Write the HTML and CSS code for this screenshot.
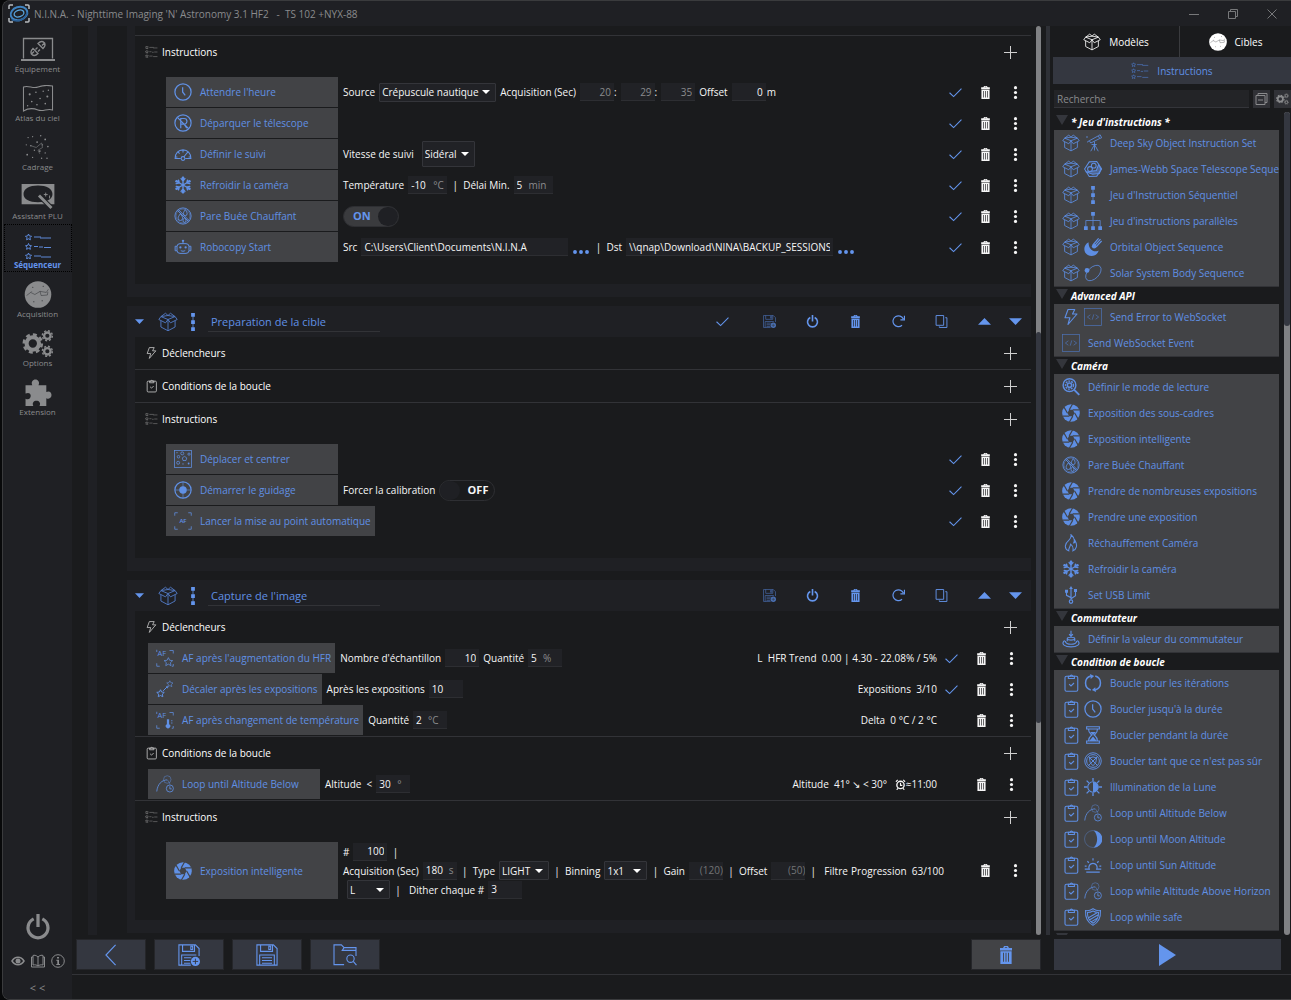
FILE: index.html
```html
<!DOCTYPE html>
<html lang="fr">
<head>
<meta charset="utf-8">
<meta name="viewport" content="width=device-width, initial-scale=1">
<title>N.I.N.A. - Séquenceur</title>
<link rel="stylesheet" href="styles.css">
</head>
<body>
<svg class="sprite" aria-hidden="true">
  <defs>
    <symbol id="i-box" viewBox="0 0 24 24"><g fill="none" stroke="currentColor" stroke-width="1.1" stroke-linejoin="round"><path d="M12 9 3.5 5.5 9 1.5l3 2.7 3-2.7 5.5 4L12 9zM3.500 5.500 1 9l8 4 3-4 3 4 8-4-2.500-3.500M3.500 10.500V18L12 22.500 20.500 18v-7.500M12 9v13.500M3.500 5.500 12 4.200l8.500 1.300"/></g></symbol>
    <symbol id="i-list" viewBox="0 0 24 24"><g fill="none" stroke="currentColor" stroke-width="1"><path d="m3.500 1 .8 1.700 1.900.2-1.400 1.300.4 1.900-1.700-1-1.700 1 .4-1.900L.8 2.900l1.900-.2z"/><path d="m3.500 9 .8 1.700 1.900.2-1.400 1.300.4 1.900-1.700-1-1.700 1 .4-1.900L.8 10.900l1.900-.2zM3.500 17l.8 1.700 1.900.2-1.400 1.300.4 1.900-1.700-1-1.700 1 .4-1.900L.8 18.900l1.900-.2z"/><path d="M8 3.500h8M15 4.500h8M8 11.500h4M13 12.500h3M17 12h6M8 19.500h6M15 20.500h8"/></g></symbol>
    <symbol id="i-bolt" viewBox="0 0 24 24"><path fill="none" stroke="currentColor" stroke-width="1.500" stroke-linejoin="round" d="M8 2h9l-3 6h6L8 22l2.500-9H4z"/></symbol>
    <symbol id="i-clip" viewBox="0 0 24 24"><g fill="none" stroke="currentColor" stroke-width="1.500"><rect x="4" y="3" width="17" height="20" rx="2"/><path d="M8.500 3v3h8V3H14a1.500 1.500 0 0 0-3 0zM9.500 13.500l2.500 2.500 4-4"/></g></symbol>
    <symbol id="i-clock" viewBox="0 0 24 24"><g fill="none" stroke="currentColor" stroke-width="1.700"><circle cx="12" cy="12" r="10.800"/><path d="M11.500 5.500V12l3.500 4.500"/></g></symbol>
    <symbol id="i-unpark" viewBox="0 0 24 24"><g fill="none" stroke="currentColor" stroke-width="1.600"><circle cx="12" cy="12" r="10.800"/><path d="M9 19V6h4.500a3.500 3.500 0 0 1 0 7.500H9M13.500 13.500 17 19M4.500 4.500l15 15"/></g></symbol>
    <symbol id="i-gauge" viewBox="0 0 24 24"><g fill="none" stroke="currentColor" stroke-width="1.400"><path d="M9 18H1.500c0-7 4.500-11.500 10.500-11.500S22.500 11 22.500 18H15M12 6.500V10M5.500 9.500l2 2M18.500 9.500l-2 2M1.500 16h3M22.500 16h-3M13 16l4-5"/><circle cx="12" cy="18" r="2.500"/></g></symbol>
    <symbol id="i-snow" viewBox="0 0 24 24"><g fill="none" stroke="currentColor" stroke-width="1.900" stroke-linecap="round"><path d="M12 2v20M3.300 7l17.400 10M20.700 7 3.300 17M9.500 3.500 12 6.500l2.500-3M9.500 20.500l2.500-3 2.500 3M3 10l4-.8L6 5.500M21 14l-4 .8 1 3.700M18 5.500l-1 3.700 4 .8M6 18.500l1-3.700L3 14"/></g><g fill="currentColor"><circle cx="12" cy="2.500" r="1.800"/><circle cx="12" cy="21.500" r="1.800"/><circle cx="3.500" cy="7" r="1.800"/><circle cx="20.500" cy="7" r="1.800"/><circle cx="3.500" cy="17" r="1.800"/><circle cx="20.500" cy="17" r="1.800"/></g></symbol>
    <symbol id="i-dew" viewBox="0 0 24 24"><g fill="none" stroke="currentColor" stroke-width="1.200"><circle cx="12" cy="12" r="10.800"/><circle cx="12" cy="12" r="9.300" stroke-width=".6"/><path d="m4.500 4.500 15 15M6 3.500 20 18M8.500 9c-2 3-3 4-3 6a3 3 0 0 0 6 0c0-2-1-3-3-6zM15 3.500c-1.500 2.500-2.500 3.500-2.500 5.500a2.500 2.500 0 0 0 5 0c0-2-1-3-2.500-5.500zM14 14c-1.500 2-2 3-2 4.500a2 2 0 0 0 4 0c0-1.500-1-2.500-2-4.500z"/></g></symbol>
    <symbol id="i-robot" viewBox="0 0 24 24"><g fill="none" stroke="currentColor" stroke-width="1.300"><rect x="4" y="7.500" width="16" height="13" rx="4"/><path d="M4 11H1.500v6H4M20 11h2.500v6H20M12 7.500V5M9 16.500c1.500 1.500 4.500 1.500 6 0"/></g><g fill="currentColor"><circle cx="12" cy="3.800" r="1.600"/><circle cx="8.500" cy="12.500" r="1.500"/><circle cx="15.500" cy="12.500" r="1.500"/></g></symbol>
    <symbol id="i-plate" viewBox="0 0 24 24"><g fill="none" stroke="currentColor" stroke-width="1"><rect x=".7" y=".7" width="22.600" height="22.600"/><path d="m14 8.500 3 2-1 3.500h-4l-1-3.500z"/><circle cx="11" cy="4.500" r="2"/><circle cx="6" cy="9" r="1.700"/><circle cx="5.500" cy="17" r="2"/><circle cx="20" cy="5.500" r="1.500"/></g><g fill="currentColor"><circle cx="4" cy="3.500" r=".8"/><circle cx="12" cy="18.500" r=".8"/><circle cx="19.500" cy="18" r="1.200"/></g></symbol>
    <symbol id="i-guide" viewBox="0 0 24 24"><circle cx="12" cy="12" r="10.800" fill="none" stroke="currentColor" stroke-width="1.600"/><path stroke="currentColor" stroke-width=".8" d="M12 1v22M1 12h22"/><circle cx="12" cy="12" r="5" fill="currentColor"/></symbol>
    <symbol id="i-frame" viewBox="0 0 24 24"><g fill="none" stroke="currentColor" stroke-width="1"><path d="M1 5V1h4M19 1h4v4M23 19v4h-4M5 23H1v-4"/></g></symbol>
    <symbol id="i-afstar" viewBox="0 0 24 24"><g fill="none" stroke="currentColor" stroke-width="1"><path d="M18 2h5v4M1 19v4h4M23 20v3h-2M1 4V1M16.500 11.500l1.700 3.500 4 .5-3 2.700.8 4-3.500-2-3.500 2 .8-4-3-2.700 4-.5z"/></g></symbol>
    <symbol id="i-aftemp" viewBox="0 0 24 24"><g fill="none" stroke="currentColor" stroke-width="1"><path d="M18 2h5v4M1 19v4h4M23 20v3h-2M1 4V1M20 13h2M20 16h2"/></g><path fill="currentColor" d="M14.500 11h3v6.500a3 3 0 1 1-3 0z"/></symbol>
    <symbol id="i-dither" viewBox="0 0 24 24"><g fill="none" stroke="currentColor" stroke-width="1.300"><path d="m6 13 1.500 3 3.500.5-2.500 2.300.6 3.500L6 20.700l-3 1.600.6-3.500L1 16.500l3.500-.5z"/><path d="M9.500 14.500 15 9M13.500 9H15.500v2"/><path opacity=".6" d="m18.500 1 1.200 2.500 3 .4-2.200 2 .6 3-2.600-1.500-2.600 1.500.6-3-2.200-2 3-.4z"/></g></symbol>
    <symbol id="i-alt" viewBox="0 0 24 24"><g fill="none" stroke="currentColor" stroke-width="1.100"><path d="M1 22C2 12 8 6.500 15 6.500"/><circle cx="15" cy="6" r="5" opacity=".55"/><path opacity=".55" d="M15 6.500c2 2 3 4 3.500 6"/><circle cx="18.500" cy="18" r="4.700"/><path d="M18.500 15v3.500H21"/></g></symbol>
    <symbol id="i-iris" viewBox="0 0 24 24"><circle cx="12" cy="12" r="11.800" fill="currentColor"/><path fill="var(--tile)" d="M16.800 12 14.400 16.200H9.600L7.200 12 9.600 7.800h4.800z"/><g stroke="var(--tile)" stroke-width="1.500"><path d="m14.400 16.200-4.500 7.800"/><path d="m14.400 16.200-4.500 7.800" transform="rotate(60 12 12)"/><path d="m14.400 16.200-4.500 7.800" transform="rotate(120 12 12)"/><path d="m14.400 16.200-4.500 7.800" transform="rotate(180 12 12)"/><path d="m14.400 16.200-4.500 7.800" transform="rotate(240 12 12)"/><path d="m14.400 16.200-4.500 7.800" transform="rotate(300 12 12)"/></g></symbol>
    <symbol id="i-check" viewBox="0 0 24 24"><path fill="none" stroke="currentColor" stroke-width="2" d="m1 12.500 7.500 7L23 5"/></symbol>
    <symbol id="i-trash" viewBox="0 0 24 24"><path fill="currentColor" fill-rule="evenodd" d="M8 2.500 9.500 0h5L16 2.500h4V6H4V2.500zm2.200 0h3.600L13.300 1.500h-2.600zM4.500 7h15v17h-15zM8 9v12h1.200V9zm3.400 0v12h1.200V9zm3.400 0v12H16V9z"/></symbol>
    <symbol id="i-dots" viewBox="0 0 24 24"><g fill="currentColor"><circle cx="12" cy="3" r="2.900"/><circle cx="12" cy="12" r="2.900"/><circle cx="12" cy="21" r="2.900"/></g></symbol>
    <symbol id="i-more" viewBox="0 0 24 8"><g fill="currentColor"><circle cx="4" cy="4" r="2.600"/><circle cx="12" cy="4" r="2.600"/><circle cx="20" cy="4" r="2.600"/></g></symbol>
    <symbol id="i-seq" viewBox="0 0 24 24"><g fill="currentColor"><path d="M9.500 0h5v5h-5zM9.500 9.500h5v5h-5zM9.500 19h5v5h-5zM11.500 4h1v16h-1z"/></g></symbol>
    <symbol id="i-plus" viewBox="0 0 13 13"><path stroke="currentColor" d="M6.500 0v13M0 6.500h13"/></symbol>
    <symbol id="i-save" viewBox="0 0 24 24"><g fill="none" stroke="currentColor" stroke-width="1.200"><path d="M1 1h18l4 4v18H1zM5 1v7h13V1M14 2.500h2V6h-2zM4 23V12h16v11M6.500 15h11M6.500 18h11M6.500 21h11"/></g></symbol>
    <symbol id="i-saveplus" viewBox="0 0 24 24"><g fill="none" stroke="currentColor" stroke-width="1.200"><path d="M14 23H1V1h18l4 4v8M5 1v7h13V1M14 2.500h2V6h-2zM4 23V12h16M6.500 15h8M6.500 18h7M6.500 21h7"/></g><circle cx="19" cy="19" r="5" fill="currentColor"/><path stroke="var(--btn)" d="M19 16v6M16 19h6"/></symbol>
    <symbol id="i-power" viewBox="0 0 24 24"><path fill="none" stroke="currentColor" stroke-width="3" d="M8 4.500a9.200 9.200 0 1 0 8 0M12 0v12"/></symbol>
    <symbol id="i-redo" viewBox="0 0 24 24"><path fill="none" stroke="currentColor" stroke-width="2.200" d="M18.500 19A10 10 0 1 1 21 7.500M23 1.500V9h-7.500"/></symbol>
    <symbol id="i-copy" viewBox="0 0 24 24"><path fill="none" stroke="currentColor" stroke-width="1.700" d="M2 1h14v18H2zM19 5h3v18H8v-2"/></symbol>
    <symbol id="i-up" viewBox="0 0 24 24"><path fill="currentColor" d="M12 5.500 24 18H0z"/></symbol>
    <symbol id="i-down" viewBox="0 0 24 24"><path fill="currentColor" d="M12 18.500 24 6H0z"/></symbol>
    <symbol id="i-scope" viewBox="0 0 24 24"><g fill="none" stroke="currentColor" stroke-width="1.100"><path d="m7 9 12-6.500 2 3.500L9 12zM19 2.500l2.500-1.500 2 4L21 6M4 11l3-2M14 10v4M14 14 9 23M14 14l5 9M14 14v8M10 14h7"/></g><circle cx="4" cy="4" r="1" fill="currentColor"/></symbol>
    <symbol id="i-jwst" viewBox="0 0 24 24"><g fill="none" stroke="currentColor" stroke-width="1.400"><path d="m7 2.500 10-.5 6.500 10L17 21.500 7 22 .8 12z"/><circle cx="13" cy="7.500" r="3.200"/><circle cx="8" cy="12" r="3.200"/><path fill="currentColor" fill-opacity=".5" d="m3.500 16 8 3 9-1 2-6-3-6-3 8-7 1z"/></g></symbol>
    <symbol id="i-par" viewBox="0 0 24 24"><path fill="currentColor" d="M9.500 0h5v5h-5zM0 19h5v5H0zM9.500 19h5v5h-5zM19 19h5v5h-5zM11.500 5h1v6H22v8h-1v-7h-8.500v7h-1v-7H3v7H2v-8h9.500z"/></symbol>
    <symbol id="i-orbital" viewBox="0 0 24 24"><path fill="currentColor" d="M6 5.500C-1 9-1.500 19 5 22.500s13 0 14.500-6C14 20 6 16 6 5.500z"/><path stroke="currentColor" stroke-width="1.600" d="m12 9 7.500-8.500M13.500 11 22 1.500M16 12l7.500-8"/><circle cx="13.500" cy="11" r="3" fill="currentColor"/></symbol>
    <symbol id="i-orbit" viewBox="0 0 24 24"><ellipse cx="12.500" cy="12" rx="12.500" ry="7.500" transform="rotate(-45 12.500 12)" fill="none" stroke="currentColor"/><circle cx="4" cy="8.500" r="3.200" fill="currentColor"/></symbol>
    <symbol id="i-code" viewBox="0 0 24 24"><g fill="none" stroke="currentColor"><rect x=".6" y=".6" width="22.800" height="22.800"/><path d="m8.500 9-4 3 4 3M15.500 9l4 3-4 3M13 8.500l-2 7"/></g></symbol>
    <symbol id="i-read" viewBox="0 0 24 24"><g fill="none" stroke="currentColor" stroke-width="1.900"><circle cx="10" cy="9.500" r="8.500"/><path stroke-width="2.500" d="m16 15.500 7 7"/><circle cx="10" cy="9.500" r="2.800"/><circle cx="10" cy="9.500" r="5.300" stroke-dasharray="2.500 1.300"/></g></symbol>
    <symbol id="i-flame" viewBox="0 0 24 24"><path fill="none" stroke="currentColor" stroke-width="1.400" d="M9 22.500c-7-3-5-10 0-14C12 6 12.500 4 12 1c5 4 5 8 3.500 11 1.500 0 2-1.500 2-3 3.500 6 2 11-3 13.500 1-4-.5-7-3-9-.5 4-3 5-2.500 9z"/></symbol>
    <symbol id="i-usb" viewBox="0 0 24 24"><g fill="none" stroke="currentColor" stroke-width="1.500"><path d="M12 3v15M12 15.500 6 12.500V8M12 17l6-4V7"/><circle cx="12" cy="20.800" r="2.300"/></g><path fill="currentColor" d="m12 0 2.500 4h-5zM4 5h4v4H4zM16 4h4v4h-4z"/></symbol>
    <symbol id="i-switch" viewBox="0 0 24 24"><g fill="none" stroke="currentColor" stroke-width="1.500"><path d="M12 1v8M9.500 5.500 12 8.500l2.500-3M7 15v-3.500c0-2.500 10-2.500 10 0V15M7 12c1 2 9 2 10 0M4.500 14.500c-1 6 16 6 15 0M3.500 14c-6 5 1 8.500 8.500 8.500s14.500-3.500 8.500-8.500"/></g></symbol>
    <symbol id="i-loop" viewBox="0 0 24 24"><path fill="none" stroke="currentColor" stroke-width="2" d="M9 21.300A9.700 9.700 0 0 1 9 2.700M15 2.700a9.700 9.700 0 0 1 0 18.600"/><path fill="currentColor" d="M8 0l5.500 2.700L9 6.500zM16 24l-5.500-2.700 4.500-3.800z"/></symbol>
    <symbol id="i-hour" viewBox="0 0 24 24"><g fill="none" stroke="currentColor" stroke-width="1.500"><path d="M3.500 1h17v3h-17zM3.500 20h17v3h-17zM6 4c0 5 2.500 6 4.500 8C8.500 14 6 15 6 20M18 4c0 5-2.500 6-4.500 8 2 2 4.500 3 4.500 8"/></g><path fill="currentColor" d="M8 8h8l-4 4zM12 14l5 6H7z"/></symbol>
    <symbol id="i-unsafe" viewBox="0 0 24 24"><g fill="none" stroke="currentColor" stroke-width="1.300"><circle cx="12" cy="12" r="11"/><circle cx="12" cy="12" r="8.500"/><path d="m6 6 12 12M18 6 6 18M7.500 8 12 6.500 16.500 8c0 5-1 8-4.500 10-3.500-2-4.500-5-4.500-10z"/></g></symbol>
    <symbol id="i-illum" viewBox="0 0 24 24"><circle cx="12" cy="12" r="7" fill="none" stroke="currentColor" stroke-width="1.500"/><path fill="currentColor" d="M12 5a7 7 0 0 1 0 14z"/><path stroke="currentColor" stroke-width="1.800" d="M12 0v4M12 20v4M0 12h4M20 12h4M3.500 3.500l3 3M17.500 17.500l3 3M20.500 3.500l-3 3M6.500 17.500l-3 3"/></symbol>
    <symbol id="i-moon" viewBox="0 0 24 24"><circle cx="12" cy="12" r="11.300" fill="none" stroke="currentColor" stroke-width="1" opacity=".5"/><path fill="currentColor" d="M13 .5a11.500 11.500 0 0 1 0 23c6-6 6-17 0-23z"/></symbol>
    <symbol id="i-sun" viewBox="0 0 24 24"><path fill="none" stroke="currentColor" stroke-width="1.600" d="M1 17.500h6a5.500 5.500 0 1 1 10 0h6M3 21.500h18M12 3v3M4.500 7l2 2M19.500 7l-2 2M1 13.500h2.500M20.500 13.500H23"/></symbol>
    <symbol id="i-shield" viewBox="0 0 24 24"><g fill="none" stroke="currentColor" stroke-width="1.400"><path d="M2 3.500c4 .5 7-.5 10-2.500 3 2 6 3 10 2.500C22.500 13 20 19 12 23 4 19 1.500 13 2 3.500z"/><path d="M4.500 6c3 0 5-.5 7.500-2 2.500 1.500 4.500 2 7.500 2 0 7-2 11-7.500 14.300C6.500 17 4.500 13 4.500 6zM6 13l12-7M7 16l12-7M9.500 18.500l9-5.500"/></g></symbol>
    <symbol id="i-orb" viewBox="0 0 26 26"><circle cx="13" cy="13" r="12.800" fill="currentColor"/><g fill="none" stroke="var(--ink)" stroke-width=".6" opacity=".7"><path d="m2 14 4-3 4 2 5-3 6 1 2-3M15 10l1 4 6-.5.500-3M6 11l1-1"/></g><g fill="var(--ink)"><circle cx="8" cy="6" r=".5"/><circle cx="17" cy="19" r=".5"/><circle cx="9" cy="20" r=".5"/><circle cx="18" cy="5" r=".5"/></g></symbol>
    <symbol id="i-gears" viewBox="0 0 30 26"><g fill="none" stroke="currentColor"><circle cx="10" cy="13" r="6" stroke-width="4"/><circle cx="10" cy="13" r="8.700" stroke-width="2.400" stroke-dasharray="3.800 3"/><circle cx="24" cy="5.500" r="3.100" stroke-width="2.200"/><circle cx="24" cy="5.500" r="4.800" stroke-width="1.400" stroke-dasharray="2 1.770"/><circle cx="24" cy="20.500" r="3.100" stroke-width="2.200"/><circle cx="24" cy="20.500" r="4.800" stroke-width="1.400" stroke-dasharray="2 1.770"/></g></symbol>
  </defs>
</svg>

<div class="window">
  <header class="titlebar">
    <svg class="logo" viewBox="0 0 22 20"><g fill="none"><path stroke="#b9bcc0" stroke-width="1.500" d="M1 5V2q0-1 1-1h3M17 1h3q1 0 1 1v3M21 14v3q0 1-1 1h-3M5 18H2q-1 0-1-1v-3"/><g transform="rotate(-18 11 9.500)"><ellipse cx="11" cy="9.500" rx="8.500" ry="6.500" stroke="#3f83c0" stroke-width="2"/><ellipse cx="11" cy="9.500" rx="5" ry="3.300" stroke="#5aa5dc" stroke-width="1.300"/><path stroke="#2b5f94" stroke-width="1.500" d="M2 13c5 5 14 4 17-2"/></g></g></svg>
    <h1>N.I.N.A. - Nighttime Imaging 'N' Astronomy 3.1 HF2 &nbsp; - &nbsp;TS 102 +NYX-88</h1>
    <div class="winctl">
      <button aria-label="Réduire"><svg viewBox="0 0 10 10"><path d="M0 5.500h10"/></svg></button>
      <button aria-label="Restaurer"><svg viewBox="0 0 10 10"><path d="M.5 2.500h7v7h-7zM2.500 2.500v-2h7v7h-2"/></svg></button>
      <button aria-label="Fermer"><svg viewBox="0 0 10 10"><path d="m.5.500 9 9M9.500.500l-9 9"/></svg></button>
    </div>
  </header>

  <nav class="side">
    <a href="#"><svg viewBox="0 0 34 24"><g fill="none" stroke="currentColor" stroke-width="1.300"><path d="M2.500 21V1h29v20"/><path stroke-width="2" d="M0 22.500h34"/><path d="m10 17 3-3M12 11l5 5c-3 3-5 2-6 1s-2-3 1-6zM24 5l-3 3M17 6l5 5c3-3 2-5 1-6s-3-2-6 1zM14.500 12l2-2M17 14l2-2"/></g></svg><span>Équipement</span></a>
    <a href="#"><svg viewBox="0 0 30 26"><path fill="none" stroke="currentColor" d="M1 2c5-2 9 2 14 0s9-2 14-1v23c-5-2-9 2-14 0s-9-2-14 1z"/><g fill="currentColor"><circle cx="7" cy="9" r="1"/><circle cx="13" cy="7" r=".8"/><circle cx="20" cy="6" r=".7"/><circle cx="9" cy="16" r=".8"/><circle cx="17" cy="13" r=".8"/><circle cx="24" cy="11" r="1"/><circle cx="22" cy="18" r=".8"/><circle cx="14" cy="19" r=".8"/><circle cx="5" cy="20" r=".7"/><circle cx="25" cy="5" r=".7"/></g></svg><span>Atlas du ciel</span></a>
    <a href="#"><svg viewBox="0 0 30 30"><g fill="currentColor"><circle cx="4" cy="4" r=".8"/><circle cx="9" cy="3" r=".7"/><circle cx="18" cy="2" r=".8"/><circle cx="23" cy="6" r="1"/><circle cx="2" cy="12" r=".7"/><circle cx="7" cy="13" r=".8"/><circle cx="14" cy="9" r="1"/><circle cx="20" cy="12" r=".7"/><circle cx="26" cy="14" r=".9"/><circle cx="11" cy="18" r=".8"/><circle cx="17" cy="19" r="1"/><circle cx="23" cy="21" r=".8"/><circle cx="3" cy="23" r="1"/><circle cx="9" cy="26" r=".7"/><circle cx="19" cy="27" r=".8"/><circle cx="25" cy="27" r=".8"/></g><path fill="none" stroke="currentColor" stroke-width=".6" d="m7 13 6 2 6-5 1 5-5 3 2 4"/></svg><span>Cadrage</span></a>
    <a href="#"><svg viewBox="0 0 34 28"><path fill="currentColor" fill-rule="evenodd" d="M0 1h34v21H0zM17 2.500C8 2.500 2 6 2 11.500S8 20 17 20s15-3 15-8.500S26 2.500 17 2.500z"/><path stroke="#1f2024" stroke-width="5" d="m18 13 13 13"/><path stroke="currentColor" stroke-width="3" d="m18 13 13 13"/><path stroke="currentColor" d="M25 10v4M23 12h4M29 13v3"/></svg><span>Assistant PLU</span></a>
    <a href="#" class="on" aria-current="page"><svg viewBox="0 0 26 26"><g fill="none" stroke="currentColor" stroke-width=".9"><path d="m3.500 1 .9 2 2.100.2L5 4.700l.4 2.100-1.900-1-1.900 1L2 4.700.500 3.200 2.600 3zM3.500 10.500l.9 2 2.100.2L5 14.200l.4 2.100-1.900-1-1.900 1 .4-2.100-1.500-1.500 2.100-.2zM3.500 20l.9 2 2.100.2L5 23.700l.4 2.100-1.900-1-1.900 1 .4-2.100-1.500-1.500 2.100-.2z"/><path d="M9 4h7M15 5h11M9 13.500h4M14 14h4M19 14.500h7M9 23h7M16 24h10"/></g></svg><span>Séquenceur</span></a>
    <a href="#"><svg><use href="#i-orb"/></svg><span>Acquisition</span></a>
    <a href="#"><svg><use href="#i-gears"/></svg><span>Options</span></a>
    <a href="#"><svg viewBox="0 0 26 26"><path fill="currentColor" d="M1 6h6.500C6 3 8 .5 10.500.5S15 3 13.500 6H21v6.500c3-1.500 5 .5 5 3s-2 4.500-5 3V26h-6.500c1.500-3-.5-5-3-5s-4.500 2-3 5H1v-7c3 1.500 5-.5 5-2.800S4 12.500 1 14z"/></svg><span>Extension</span></a>
    <div class="side-foot">
      <button aria-label="Quitter"><svg class="big"><use href="#i-power"/></svg></button>
      <div>
        <button aria-label="Affichage"><svg viewBox="0 0 14 14"><path fill="none" stroke="currentColor" stroke-width="1.500" d="M1 7c3-5 9-5 12 0-3 5-9 5-12 0z"/><circle cx="7" cy="7" r="2.500" fill="currentColor"/></svg></button>
        <button aria-label="Documentation"><svg viewBox="0 0 14 14"><path fill="none" stroke="currentColor" d="M7 3C5 1 3 1 2 1.500v9.500c2-.5 4 0 5 1 1-1 3-1.500 5-1V1.500C11 1 9 1 7 3zv9M2 3H.5v10h13V3H12"/></svg></button>
        <button aria-label="À propos"><svg viewBox="0 0 14 14"><circle cx="7" cy="7" r="6.300" fill="none" stroke="currentColor"/><path fill="currentColor" d="M6 3h2v1.600H6zM5.300 5.800H8v4.200h1v1H5.300v-1h1V6.800h-1z"/></svg></button>
      </div>
      <button class="fold" aria-label="Replier">&lt; &lt;</button>
    </div>
  </nav>

  <main class="work">
    <div class="scroller">
      <div class="rail"></div>
      <div class="seq">

        <section class="block">
          <div class="inner first">
            <div class="sec"><svg class="dim"><use href="#i-list"/></svg><h3>Instructions</h3><button aria-label="Ajouter"><svg><use href="#i-plus"/></svg></button></div>
            <div class="rows ins">
              <div class="row"><button class="tile"><svg><use href="#i-clock"/></svg>Attendre l'heure</button>
                <div class="par"><label for="src">Source</label><span class="sel w117"><select id="src"><option>Crépuscule nautique</option></select></span><label for="hh">Acquisition (Sec)</label><input id="hh" class="num off" value="20"><span class="after">:</span><input class="num off" aria-label="Minutes" value="29"><span class="after">:</span><input class="num off" aria-label="Secondes" value="35"><label for="of">Offset</label><input id="of" class="num" value="0"><span class="after">m</span></div>
                <div class="act"><svg class="blue"><use href="#i-check"/></svg><button aria-label="Supprimer"><svg><use href="#i-trash"/></svg></button><button aria-label="Menu"><svg><use href="#i-dots"/></svg></button></div></div>
              <div class="row"><button class="tile"><svg><use href="#i-unpark"/></svg>Déparquer le télescope</button><div class="par"></div>
                <div class="act"><svg class="blue"><use href="#i-check"/></svg><button aria-label="Supprimer"><svg><use href="#i-trash"/></svg></button><button aria-label="Menu"><svg><use href="#i-dots"/></svg></button></div></div>
              <div class="row"><button class="tile"><svg><use href="#i-gauge"/></svg>Définir le suivi</button>
                <div class="par"><label for="vs">Vitesse de suivi</label><span class="sel tall w53"><select id="vs"><option>Sidéral</option></select></span></div>
                <div class="act"><svg class="blue"><use href="#i-check"/></svg><button aria-label="Supprimer"><svg><use href="#i-trash"/></svg></button><button aria-label="Menu"><svg><use href="#i-dots"/></svg></button></div></div>
              <div class="row"><button class="tile"><svg><use href="#i-snow"/></svg>Refroidir la caméra</button>
                <div class="par"><label for="te">Température</label><span class="unit w39"><input id="te" value="-10"><i>°C</i></span><span class="bar">|</span><label for="dm">Délai Min.</label><span class="unit w39"><input id="dm" value="5" class="one"><i>min</i></span></div>
                <div class="act"><svg class="blue"><use href="#i-check"/></svg><button aria-label="Supprimer"><svg><use href="#i-trash"/></svg></button><button aria-label="Menu"><svg><use href="#i-dots"/></svg></button></div></div>
              <div class="row"><button class="tile"><svg><use href="#i-dew"/></svg>Pare Buée Chauffant</button>
                <div class="par"><button class="toggle on" role="switch" aria-checked="true"><b>ON</b><span></span></button></div>
                <div class="act"><svg class="blue"><use href="#i-check"/></svg><button aria-label="Supprimer"><svg><use href="#i-trash"/></svg></button><button aria-label="Menu"><svg><use href="#i-dots"/></svg></button></div></div>
              <div class="row"><button class="tile"><svg><use href="#i-robot"/></svg>Robocopy Start</button>
                <div class="par"><label for="rs">Src</label><input id="rs" class="path" value="C:\Users\Client\Documents\N.I.N.A"><button class="more" aria-label="Parcourir la source"><svg><use href="#i-more"/></svg></button><span class="bar">|</span><label for="rd">Dst</label><input id="rd" class="path" value="\\qnap\Download\NINA\BACKUP_SESSIONS"><button class="more" aria-label="Parcourir la destination"><svg><use href="#i-more"/></svg></button></div>
                <div class="act"><svg class="blue"><use href="#i-check"/></svg><button aria-label="Supprimer"><svg><use href="#i-trash"/></svg></button><button aria-label="Menu"><svg><use href="#i-dots"/></svg></button></div></div>
            </div>
          </div>
        </section>

        <section class="block">
          <div class="head"><button class="caret" aria-label="Replier"><svg><use href="#i-down"/></svg></button><svg class="box"><use href="#i-box"/></svg><svg class="seqi"><use href="#i-seq"/></svg><input class="name" aria-label="Nom" value="Preparation de la cible">
            <div class="tools"><svg class="first"><use href="#i-check"/></svg><button aria-label="Enregistrer"><svg class="thin"><use href="#i-saveplus"/></svg></button><button aria-label="Activer"><svg><use href="#i-power"/></svg></button><button aria-label="Supprimer"><svg><use href="#i-trash"/></svg></button><button aria-label="Réinitialiser"><svg><use href="#i-redo"/></svg></button><button aria-label="Copier"><svg><use href="#i-copy"/></svg></button><button aria-label="Monter"><svg><use href="#i-up"/></svg></button><button aria-label="Descendre"><svg><use href="#i-down"/></svg></button></div></div>
          <div class="inner">
            <div class="sec"><svg><use href="#i-bolt"/></svg><h3>Déclencheurs</h3><button aria-label="Ajouter"><svg><use href="#i-plus"/></svg></button></div>
            <div class="sec line"><svg><use href="#i-clip"/></svg><h3>Conditions de la boucle</h3><button aria-label="Ajouter"><svg><use href="#i-plus"/></svg></button></div>
            <div class="sec line"><svg class="dim"><use href="#i-list"/></svg><h3>Instructions</h3><button aria-label="Ajouter"><svg><use href="#i-plus"/></svg></button></div>
            <div class="rows ins">
              <div class="row"><button class="tile"><svg><use href="#i-plate"/></svg>Déplacer et centrer</button><div class="par"></div>
                <div class="act"><svg class="blue"><use href="#i-check"/></svg><button aria-label="Supprimer"><svg><use href="#i-trash"/></svg></button><button aria-label="Menu"><svg><use href="#i-dots"/></svg></button></div></div>
              <div class="row"><button class="tile"><svg><use href="#i-guide"/></svg>Démarrer le guidage</button>
                <div class="par"><span>Forcer la calibration</span><button class="toggle" role="switch" aria-checked="false" aria-label="Forcer la calibration"><span></span><b>OFF</b></button></div>
                <div class="act"><svg class="blue"><use href="#i-check"/></svg><button aria-label="Supprimer"><svg><use href="#i-trash"/></svg></button><button aria-label="Menu"><svg><use href="#i-dots"/></svg></button></div></div>
              <div class="row"><button class="tile"><svg viewBox="0 0 24 24"><use href="#i-frame"/><text x="12" y="15" text-anchor="middle" class="aft">AF</text></svg>Lancer la mise au point automatique</button><div class="par"></div>
                <div class="act"><svg class="blue"><use href="#i-check"/></svg><button aria-label="Supprimer"><svg><use href="#i-trash"/></svg></button><button aria-label="Menu"><svg><use href="#i-dots"/></svg></button></div></div>
            </div>
          </div>
        </section>

        <section class="block">
          <div class="head"><button class="caret" aria-label="Replier"><svg><use href="#i-down"/></svg></button><svg class="box"><use href="#i-box"/></svg><svg class="seqi"><use href="#i-seq"/></svg><input class="name" aria-label="Nom" value="Capture de l'image">
            <div class="tools"><button aria-label="Enregistrer"><svg class="thin"><use href="#i-saveplus"/></svg></button><button aria-label="Activer"><svg><use href="#i-power"/></svg></button><button aria-label="Supprimer"><svg><use href="#i-trash"/></svg></button><button aria-label="Réinitialiser"><svg><use href="#i-redo"/></svg></button><button aria-label="Copier"><svg><use href="#i-copy"/></svg></button><button aria-label="Monter"><svg><use href="#i-up"/></svg></button><button aria-label="Descendre"><svg><use href="#i-down"/></svg></button></div></div>
          <div class="inner">
            <div class="sec"><svg><use href="#i-bolt"/></svg><h3>Déclencheurs</h3><button aria-label="Ajouter"><svg><use href="#i-plus"/></svg></button></div>
            <div class="rows trig">
              <div class="row"><button class="tile"><svg viewBox="0 0 24 24"><use href="#i-afstar"/><text x="2" y="9" class="afb">AF</text></svg>AF après l'augmentation du HFR</button>
                <div class="par"><label for="ne">Nombre d'échantillon</label><input id="ne" class="num" value="10"><label for="qh">Quantité</label><span class="unit"><input id="qh" class="one" value="5"><i>%</i></span></div>
                <div class="stat">L&nbsp; HFR Trend&nbsp; 0.00 | 4.30 - 22.08% / 5%</div>
                <div class="act"><svg class="blue"><use href="#i-check"/></svg><button aria-label="Supprimer"><svg><use href="#i-trash"/></svg></button><button aria-label="Menu"><svg><use href="#i-dots"/></svg></button></div></div>
              <div class="row"><button class="tile"><svg><use href="#i-dither"/></svg>Décaler après les expositions</button>
                <div class="par"><label for="ae">Après les expositions</label><input id="ae" class="num left" value="10"></div>
                <div class="stat">Expositions&nbsp; 3/10</div>
                <div class="act"><svg class="blue"><use href="#i-check"/></svg><button aria-label="Supprimer"><svg><use href="#i-trash"/></svg></button><button aria-label="Menu"><svg><use href="#i-dots"/></svg></button></div></div>
              <div class="row"><button class="tile"><svg viewBox="0 0 24 24"><use href="#i-aftemp"/><text x="2" y="9" class="afb">AF</text></svg>AF après changement de température</button>
                <div class="par"><label for="qt">Quantité</label><span class="unit"><input id="qt" class="one" value="2"><i>°C</i></span></div>
                <div class="stat">Delta&nbsp; 0 °C / 2 °C</div>
                <div class="act"><span></span><button aria-label="Supprimer"><svg><use href="#i-trash"/></svg></button><button aria-label="Menu"><svg><use href="#i-dots"/></svg></button></div></div>
            </div>
            <div class="sec line"><svg><use href="#i-clip"/></svg><h3>Conditions de la boucle</h3><button aria-label="Ajouter"><svg><use href="#i-plus"/></svg></button></div>
            <div class="rows trig">
              <div class="row"><button class="tile"><svg><use href="#i-alt"/></svg>Loop until Altitude Below</button>
                <div class="par"><label for="al">Altitude&nbsp; &lt;</label><span class="unit"><input id="al" value="30" class="two"><i>°</i></span></div>
                <div class="stat">Altitude&nbsp; 41° ↘ &lt; 30° &nbsp; <svg class="alarm" viewBox="0 0 12 12"><circle cx="6" cy="6.500" r="4" fill="none" stroke="currentColor" stroke-width="1.500"/><path stroke="currentColor" stroke-width="1.200" fill="none" d="M6 4v3h2M1 3l2-2M11 3 9 1M3 10l-1 2M9 10l1 2"/></svg>≈11:00</div>
                <div class="act"><span></span><button aria-label="Supprimer"><svg><use href="#i-trash"/></svg></button><button aria-label="Menu"><svg><use href="#i-dots"/></svg></button></div></div>
            </div>
            <div class="sec line"><svg class="dim"><use href="#i-list"/></svg><h3>Instructions</h3><button aria-label="Ajouter"><svg><use href="#i-plus"/></svg></button></div>
            <div class="rows ins">
              <div class="row multi"><button class="tile"><svg><use href="#i-iris"/></svg>Exposition intelligente</button>
                <div class="lines">
                  <div class="par"><label for="n1">#</label><input id="n1" class="num" value="100"><span class="bar">|</span></div>
                  <div class="par"><label for="ac">Acquisition (Sec)</label><span class="unit"><input id="ac" class="three" value="180"><i>s</i></span><span class="bar">|</span><label for="ty">Type</label><span class="sel w50"><select id="ty"><option>LIGHT</option></select></span><span class="bar">|</span><label for="bi">Binning</label><span class="sel w43"><select id="bi"><option>1x1</option></select></span><span class="bar">|</span><label for="ga">Gain</label><input id="ga" class="num hint" placeholder="(120)"><span class="bar">|</span><label for="o2">Offset</label><input id="o2" class="num hint" placeholder="(50)"><span class="bar">|</span><label for="fi" class="fil">Filtre</label></div>
                  <div class="par"><span class="sel w43 in"><select id="fi"><option>L</option></select></span><span class="bar">|</span><label for="di" class="fil">Dither chaque #</label><input id="di" class="num left" value="3"></div>
                </div>
                <div class="stat">Progression&nbsp; 63/100</div>
                <div class="act"><span></span><button aria-label="Supprimer"><svg><use href="#i-trash"/></svg></button><button aria-label="Menu"><svg><use href="#i-dots"/></svg></button></div></div>
            </div>
          </div>
        </section>
      </div>
      <div class="sb"><i class="a"></i></div>
    </div>
    <div class="dock">
      <button aria-label="Retour"><svg viewBox="0 0 24 24"><path fill="none" stroke="currentColor" stroke-width="1.300" d="M17 1 6.500 12 17 23"/></svg></button>
      <button aria-label="Enregistrer sous"><svg><use href="#i-saveplus"/></svg></button>
      <button aria-label="Enregistrer"><svg><use href="#i-save"/></svg></button>
      <button aria-label="Ouvrir"><svg viewBox="0 0 26 24"><path fill="none" stroke="currentColor" stroke-width="1.200" d="M12 22.500H1V1h8l3 3h13v9M12 4l-2 3h15"/><circle cx="19" cy="16" r="4" fill="none" stroke="currentColor" stroke-width="1.200"/><path stroke="currentColor" stroke-width="1.300" d="m22 19 3.500 4"/></svg></button>
      <button class="del" aria-label="Supprimer"><svg><use href="#i-trash"/></svg></button>
    </div>
  </main>

  <aside class="lib">
    <div class="split"></div>
    <div class="libmain">
      <div class="tabs">
        <button><svg><use href="#i-box"/></svg>Modèles</button>
        <button><svg class="white"><use href="#i-orb"/></svg>Cibles</button>
      </div>
      <button class="tab-on"><svg><use href="#i-list"/></svg>Instructions</button>
      <div class="find">
        <input type="search" aria-label="Recherche" placeholder="Recherche">
        <button aria-label="Tout replier"><svg viewBox="0 0 12 12"><path fill="none" stroke="currentColor" d="M.5 2.500h9v9h-9zM2.500 2.500v-2h9v9h-2M2.500 7h5"/></svg></button>
        <button aria-label="Options"><svg><use href="#i-gears"/></svg></button>
      </div>
      <div class="treewrap">
        <div class="tree">
          <h2>* Jeu d'instructions *</h2>
          <ul>
            <li><svg><use href="#i-box"/></svg><svg><use href="#i-scope"/></svg><span>Deep Sky Object Instruction Set</span></li>
            <li><svg><use href="#i-box"/></svg><svg><use href="#i-jwst"/></svg><span>James-Webb Space Telescope Sequence</span></li>
            <li><svg><use href="#i-box"/></svg><svg><use href="#i-seq"/></svg><span>Jeu d'Instruction Séquentiel</span></li>
            <li><svg><use href="#i-box"/></svg><svg><use href="#i-par"/></svg><span>Jeu d'instructions parallèles</span></li>
            <li><svg><use href="#i-box"/></svg><svg><use href="#i-orbital"/></svg><span>Orbital Object Sequence</span></li>
            <li><svg><use href="#i-box"/></svg><svg><use href="#i-orbit"/></svg><span>Solar System Body Sequence</span></li>
          </ul>
          <h2>Advanced API</h2>
          <ul>
            <li><svg><use href="#i-bolt"/></svg><svg class="soft"><use href="#i-code"/></svg><span>Send Error to WebSocket</span></li>
            <li><svg class="soft"><use href="#i-code"/></svg><span>Send WebSocket Event</span></li>
          </ul>
          <h2>Caméra</h2>
          <ul>
            <li><svg><use href="#i-read"/></svg><span>Définir le mode de lecture</span></li>
            <li><svg><use href="#i-iris"/></svg><span>Exposition des sous-cadres</span></li>
            <li><svg><use href="#i-iris"/></svg><span>Exposition intelligente</span></li>
            <li><svg><use href="#i-dew"/></svg><span>Pare Buée Chauffant</span></li>
            <li><svg><use href="#i-iris"/></svg><span>Prendre de nombreuses expositions</span></li>
            <li><svg><use href="#i-iris"/></svg><span>Prendre une exposition</span></li>
            <li><svg><use href="#i-flame"/></svg><span>Réchauffement Caméra</span></li>
            <li><svg><use href="#i-snow"/></svg><span>Refroidir la caméra</span></li>
            <li><svg><use href="#i-usb"/></svg><span>Set USB Limit</span></li>
          </ul>
          <h2>Commutateur</h2>
          <ul>
            <li><svg><use href="#i-switch"/></svg><span>Définir la valeur du commutateur</span></li>
          </ul>
          <h2>Condition de boucle</h2>
          <ul>
            <li><svg><use href="#i-clip"/></svg><svg><use href="#i-loop"/></svg><span>Boucle pour les itérations</span></li>
            <li><svg><use href="#i-clip"/></svg><svg><use href="#i-clock"/></svg><span>Boucler jusqu'à la durée</span></li>
            <li><svg><use href="#i-clip"/></svg><svg><use href="#i-hour"/></svg><span>Boucler pendant la durée</span></li>
            <li><svg><use href="#i-clip"/></svg><svg><use href="#i-unsafe"/></svg><span>Boucler tant que ce n'est pas sûr</span></li>
            <li><svg><use href="#i-clip"/></svg><svg><use href="#i-illum"/></svg><span>Illumination de la Lune</span></li>
            <li><svg><use href="#i-clip"/></svg><svg><use href="#i-alt"/></svg><span>Loop until Altitude Below</span></li>
            <li><svg><use href="#i-clip"/></svg><svg><use href="#i-moon"/></svg><span>Loop until Moon Altitude</span></li>
            <li><svg><use href="#i-clip"/></svg><svg><use href="#i-sun"/></svg><span>Loop until Sun Altitude</span></li>
            <li><svg><use href="#i-clip"/></svg><svg><use href="#i-alt"/></svg><span>Loop while Altitude Above Horizon</span></li>
            <li><svg><use href="#i-clip"/></svg><svg><use href="#i-shield"/></svg><span>Loop while safe</span></li>
          </ul>
          <h2></h2>
        </div>
        <div class="sb"><i class="b"></i></div>
      </div>
      <button class="play" aria-label="Démarrer la séquence"><svg viewBox="0 0 17 22"><path fill="currentColor" d="M0 0 17 11 0 22z"/></svg></button>
    </div>
  </aside>

  <footer class="status"></footer>
</div>
</body>
</html>
```

FILE: styles.css
```css
:root {
  --bg: #1a1b1d;
  --band: #1f2024;
  --tile: #424346;
  --line: #323337;
  --field: #212226;
  --btn: #343740;
  --blue: #6495ed;
  --blue-text: #6090e4;
  --gray: #8a8b8d;
  --ink: #1f2024;
  --thumb: #343740;
  --track: #808184;
}

* { box-sizing: border-box; }

body {
  margin: 0;
  height: 100vh;
  overflow: hidden;
  background: #08090a;
  color: #f6f6f6;
  font: 10px/16px "Open Sans", "Noto Sans", sans-serif;
}

.sprite { display: none; }
svg { display: block; flex: none; }
h1, h2, h3, ul { margin: 0; padding: 0; font-size: inherit; font-weight: 400; }
button, input, select {
  margin: 0; padding: 0; border: 0; background: none;
  color: inherit; font: inherit; border-radius: 0; outline: 0;
}
button { display: flex; align-items: center; justify-content: center; }

.window {
  height: 100%;
  margin-left: 2px;
  display: grid;
  grid-template: 25px minmax(0, 1fr) 25px / 69px minmax(0, 1fr) 245px;
  grid-template-areas: "title title title" "side work lib" "side status status";
  border: solid #3a3b3d;
  border-width: 1px 0 1px 1px;
  border-radius: 8px 0 0 8px;
  background: var(--bg);
  overflow: hidden;
}

/* title bar */
.titlebar { grid-area: title; display: flex; align-items: center; background: var(--band); color: var(--gray); padding-left: 5px; }
.logo { width: 22px; height: 20px; }
.titlebar h1 { margin-left: 4px; flex: 1; white-space: nowrap; }
.winctl { display: flex; }
.winctl button { width: 39px; height: 24px; }
.winctl svg { width: 10px; height: 10px; fill: none; stroke: #77787a; }

/* side navigation */
.side { grid-area: side; display: flex; flex-direction: column; align-items: center; gap: 3px; padding-top: 3px; background: var(--band); color: var(--gray); }
.side a { width: 66px; height: 46px; display: flex; flex-direction: column; align-items: center; color: inherit; text-decoration: none; font-size: 8px; line-height: 10px; }
.side a svg { width: 34px; height: 27px; margin: 7px 0 1px; }
.side a.on { color: var(--blue); font-weight: 700; outline: 1px dotted #000; }
.side a.on svg { width: 26px; height: 26px; margin: 8px 0 1px; }
.side-foot { margin-top: auto; display: flex; flex-direction: column; align-items: center; padding-bottom: 3px; }
.side-foot div { display: flex; gap: 6px; margin: 14px 0 12px; }
.side-foot svg { width: 14px; height: 14px; }
.side-foot .big { width: 26px; height: 26px; }
.fold { font-size: 11px; height: 16px; }

/* sequence area */
.work { grid-area: work; display: flex; flex-direction: column; min-width: 0; }
.scroller { flex: 1; min-height: 0; display: flex; overflow: hidden; }
.rail { width: 9px; margin: 0 30px 0 16px; background: var(--band); }
.seq { flex: 1; min-width: 0; }
.block { padding: 0 0 13px 8px; margin-bottom: 9px; background: var(--band); }
.inner { background: var(--bg); padding-bottom: 21px; }
.inner.first { padding-top: 9px; }
.inner.first > .sec { border-top: 1px solid var(--line); height: 33px; }

.head { height: 31px; display: flex; align-items: center; color: var(--blue); }
.head svg { width: 13px; height: 13px; }
.head .caret svg { width: 9px; height: 9px; }
.head .box { width: 20px; height: 20px; margin: 0 6px 0 14px; color: #527bc6; }
.head .seqi { width: 18px; height: 18px; margin-right: 6px; }
.name { width: 172px; height: 20px; padding: 0 3px; border-bottom: 1px solid var(--line); color: var(--blue-text); font-size: 11px; }
.tools { margin-left: auto; display: flex; align-items: center; padding-right: 9px; gap: 30px; }
.tools .first { margin-right: 4px; }
.tools .thin { color: #4a70b4; }
.tools button:last-child { margin-left: -12px; }

.sec { height: 32px; display: flex; align-items: center; gap: 4px; padding: 0 14px 0 10px; color: #fff; }
.sec.line { height: 33px; border-top: 1px solid var(--line); }
.sec > svg { width: 13px; height: 14px; color: #c8c8c8; }
.sec > svg.dim { color: #8a8a8a; }
.sec h3 { flex: 1; }
.sec button svg { width: 13px; height: 13px; color: #d0d0d0; }

.rows.ins { padding: 9px 9px 0 31px; }
.rows.trig { padding: 0 13px 0 13px; }
.row { display: flex; align-items: stretch; height: 31px; padding-bottom: 1px; }
.row.multi { height: 57px; padding: 0; }
.tile { min-width: 172px; justify-content: flex-start; gap: 8px; padding: 0 4px 0 8px; background: var(--tile); color: var(--blue-text); white-space: nowrap; }
.tile svg { width: 18px; height: 18px; }
.aft { font: 600 8px "Open Sans", sans-serif; fill: currentColor; }
.afb { font: 10px "Open Sans", sans-serif; fill: currentColor; }
.par { flex: 1; display: flex; align-items: center; gap: 4px; padding-left: 5px; white-space: nowrap; }
.lines { flex: 1; display: flex; flex-direction: column; }
.bar { width: 8px; text-align: center; }
.after { margin-left: -4px; }
.after:last-child { margin-left: -3px; }
.fil { margin-left: 3px; }
.stat { display: flex; align-items: center; white-space: pre; }
.alarm { width: 11px; height: 11px; }
.act { display: flex; align-items: center; gap: 17px; margin-left: 8px; }
.multi .act { margin-left: 5px; }
.rows .act > * { width: 13px; }
.act svg { width: 13px; height: 13px; }
.act .blue { color: var(--blue); }

/* fields */
.num, .path, .unit { height: 18px; background: var(--field); border-bottom: 1px solid #2d2e32; }
.num { width: 34px; padding: 0 3px; text-align: right; }
.num.left { text-align: left; }
.num.off, .unit i { color: var(--gray); }
.num.hint { padding: 0; }
.num::placeholder { color: #737476; opacity: 1; }
.path { width: 207px; padding: 0 3px; }
.unit { width: 34px; display: flex; align-items: center; padding-left: 3px; }
.unit input { width: 22px; }
.unit .one { width: 12px; }
.unit .two { width: 18px; }
.unit .three { width: 23px; }
.unit i { font-style: normal; }
.w39 { width: 39px; }
.w43 { width: 43px; }
.w50 { width: 50px; }
.w53 { width: 53px; }
.w117 { width: 117px; }
.sel { display: grid; align-items: center; height: 19px; background: var(--field); border: 1px solid #34353a; border-radius: 1px; }
.sel.tall { height: 26px; margin-left: 4px; }
.sel.in { margin-left: 4px; }
.sel select { grid-area: 1 / 1; appearance: none; width: 100%; height: 100%; padding-left: 2px; }
.sel::after { content: ""; grid-area: 1 / 1; justify-self: end; margin-right: 5px; border: 4px solid transparent; border-top-color: #fff; border-bottom: 0; pointer-events: none; }
.more { align-self: flex-end; height: 20px; }
.more svg { width: 18px; height: 6px; color: var(--blue); }
.toggle { width: 56px; height: 21px; border: 1px solid #2e2f33; border-radius: 11px; justify-content: space-between; font-size: 11px; }
.toggle b { font-weight: 700; }
.toggle span { width: 20px; height: 19px; border-radius: 10px; background: var(--band); }
.toggle.on { background: #3a3b3e; color: var(--blue); padding-left: 9px; }
.toggle:not(.on) { padding-right: 6px; }

/* scroll bars */
.sb { width: 5px; margin: 0 5px; border-radius: 3px; background: var(--track); display: flex; flex-direction: column; }
.sb i { background: var(--thumb); border-radius: 3px; }
.sb .a { height: 43%; margin-top: 306px; }
.sb .b { height: 26%; }

.dock { display: flex; gap: 8px; padding: 4px 5px 4px 4px; height: 39px; }
.dock button { width: 70px; height: 31px; background: var(--btn); color: var(--blue); border: 1px solid #25262a; }
.dock svg { width: 24px; height: 22px; }
.dock .del { margin-left: auto; background: var(--tile); }
.dock .del svg { width: 18px; height: 18px; }

/* library */
.lib { grid-area: lib; display: flex; min-width: 0; }
.split { width: 4px; margin: 0 3px 39px 0; background: #2e3036; }
.libmain { flex: 1; min-width: 0; display: flex; flex-direction: column; }
.tabs { display: grid; grid-template-columns: 126px 1fr; height: 31px; color: #fff; }
.tabs button { gap: 8px; }
.tabs button + button { border-left: 1px solid #3a3b3e; }
.tabs svg, .tab-on svg { width: 18px; height: 18px; }
.tab-on { height: 27px; gap: 8px; background: var(--btn); color: var(--blue-text); }
.tab-on svg { color: #4a70b4; }
.find { display: flex; gap: 4px; margin: 6px 0 4px 1px; height: 18px; }
.find input { flex: 1; min-width: 0; background: #232427; border-bottom: 1px solid #34353a; padding: 0 3px; }
.find input::placeholder { color: var(--gray); opacity: 1; }
.find button { width: 17px; background: #303136; color: var(--gray); }
.find svg { width: 13px; height: 12px; }
.treewrap { flex: 1; min-height: 0; display: flex; }
.tree { flex: 1; min-width: 0; overflow: hidden; padding-left: 1px; }
.tree h2 { height: 18px; line-height: 20px; padding-left: 17px; font-size: 10px; font-weight: 700; font-style: italic; color: #fff; background: linear-gradient(var(--line), var(--line)) 0 0 / 100% 1px no-repeat; }
.tree h2:first-child { background: none; }
.tree h2::before { content: ""; float: left; margin: 3px 0 0 -15px; border: 6px solid transparent; border-top: 10px solid #34363c; border-bottom: 0; }
.tree ul { list-style: none; background: var(--tile); }
.tree li { height: 26px; display: flex; align-items: center; gap: 4px; padding-left: 8px; color: var(--blue-text); white-space: nowrap; overflow: hidden; }
.tree li svg { width: 18px; height: 18px; color: #5e8ee3; }
.tree li svg.soft { color: #4c70b0; }
.tree li span { margin-left: 4px; }
.treewrap .sb { width: 6px; margin: 0 1px 0 5px; }
.play { height: 31px; margin: 4px 10px 4px 1px; background: var(--btn); color: var(--blue); }
.play svg { width: 17px; height: 22px; }

.status { grid-area: status; border-top: 1px solid var(--line); }
```
